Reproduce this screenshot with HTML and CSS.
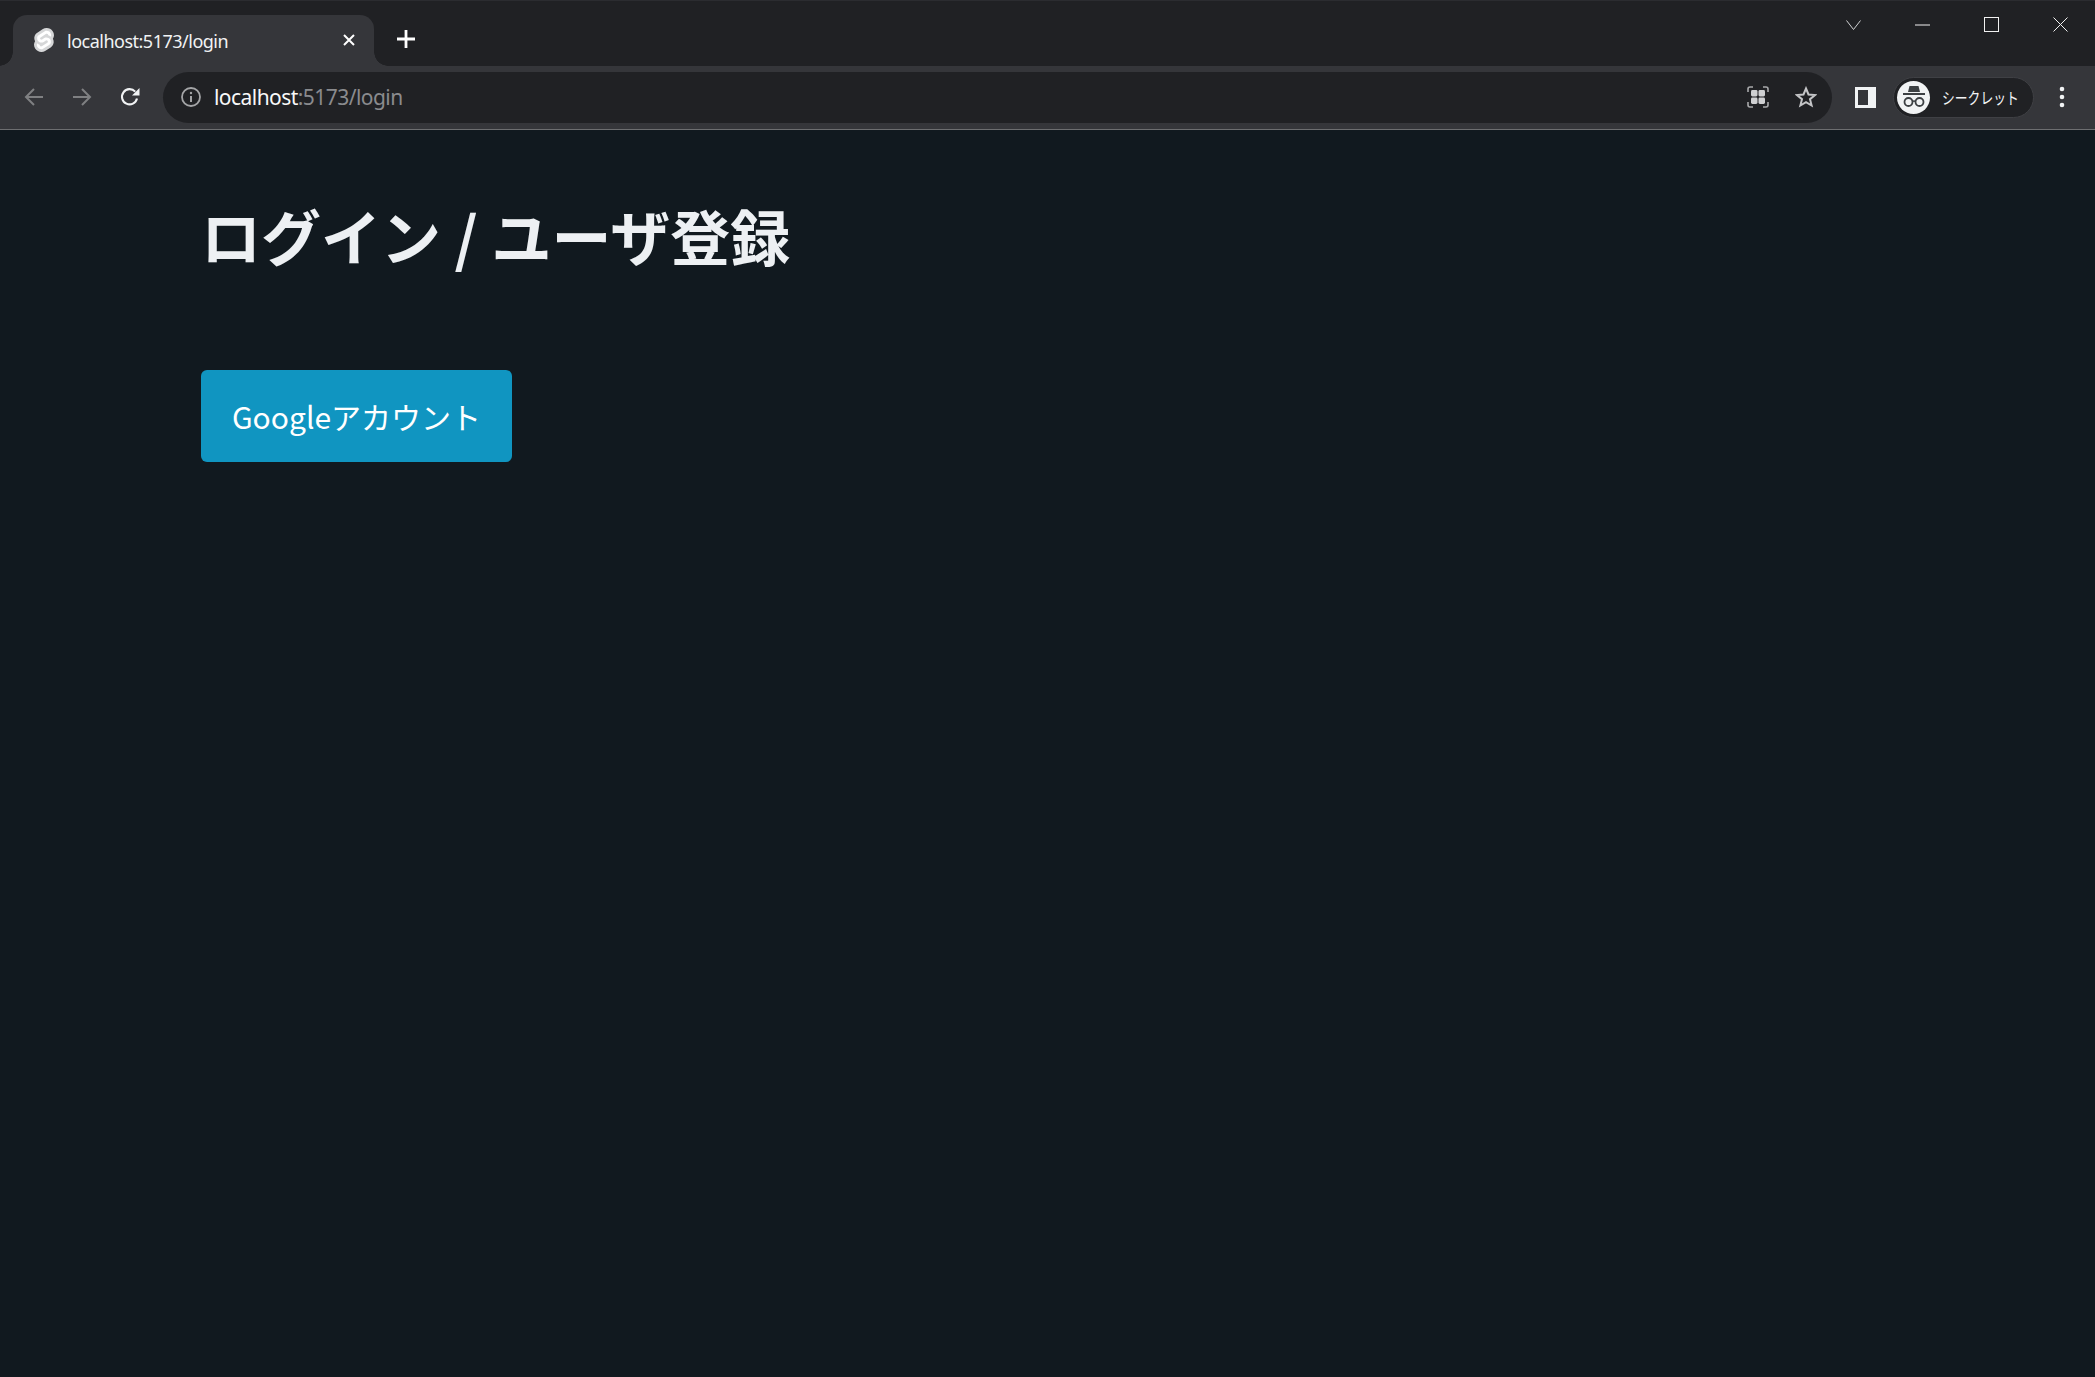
FILE: index.html
```html
<!DOCTYPE html>
<html lang="ja">
<head>
<meta charset="utf-8">
<title>ログイン / ユーザ登録</title>
<link rel="stylesheet" href="styles.css">
</head>
<body>
<div class="window">
  <header class="tabstrip">
    <div class="tab">
      <svg class="favicon" viewBox="0 0 98.100 118" width="20" height="24"><path d="M91.800 15.600C80.900-.1 59.200-4.700 43.600 5.200L16.100 22.800C8.600 27.500 3.400 35.200 1.900 43.900c-1.300 7.300-.2 14.800 3.300 21.300-2.400 3.600-4 7.600-4.700 11.800-1.600 8.900.5 18.100 5.700 25.400 11 15.700 32.600 20.300 48.200 10.400l27.500-17.500c7.500-4.700 12.700-12.400 14.200-21.100 1.300-7.300.2-14.800-3.300-21.300 2.400-3.600 4-7.600 4.700-11.800 1.700-9-.4-18.200-5.700-25.500" fill="#d6d7d8"/><path d="M40.900 103.900c-8.900 2.300-18.200-1.200-23.400-8.700-3.200-4.400-4.400-9.900-3.500-15.300.2-.9.400-1.700.6-2.600l.5-1.600 1.400 1c3.300 2.400 6.900 4.200 10.800 5.400l1 .3-.1 1c-.1 1.400.3 2.900 1.100 4.100 1.600 2.300 4.400 3.400 7.100 2.700.6-.2 1.200-.4 1.700-.7L65.500 72c1.400-.9 2.300-2.200 2.600-3.800.3-1.600-.1-3.300-1-4.600-1.600-2.300-4.400-3.300-7.100-2.600-.6.2-1.200.4-1.700.7l-10.500 6.700c-1.700 1.100-3.600 1.900-5.600 2.400-8.900 2.300-18.200-1.200-23.400-8.700-3.100-4.400-4.400-9.900-3.400-15.300.9-5.200 4.100-9.900 8.600-12.700l27.500-17.500c1.700-1.100 3.600-1.900 5.600-2.500 8.900-2.300 18.200 1.200 23.400 8.700 3.200 4.400 4.400 9.900 3.500 15.300-.2.900-.4 1.700-.7 2.600l-.5 1.600-1.400-1c-3.300-2.400-6.900-4.200-10.800-5.400l-1-.3.1-1c.1-1.400-.3-2.900-1.100-4.100-1.600-2.300-4.400-3.300-7.100-2.600-.6.2-1.200.4-1.700.7L32.400 46.100c-1.400.9-2.300 2.200-2.600 3.800s.1 3.300 1 4.600c1.600 2.300 4.400 3.300 7.100 2.600.6-.2 1.200-.4 1.700-.7l10.500-6.700c1.700-1.100 3.600-1.900 5.600-2.500 8.900-2.300 18.200 1.200 23.400 8.700 3.200 4.400 4.400 9.900 3.500 15.300-.9 5.200-4.100 9.900-8.600 12.700l-27.500 17.500c-1.700 1.100-3.600 1.900-5.600 2.500" fill="#ffffff"/></svg>
      <span class="tab-title">localhost:5173/login</span>
      <svg class="tab-close" viewBox="0 0 12 12" width="12" height="12"><path d="M1 1l10 10M11 1L1 11" stroke="#fff" stroke-width="2" fill="none"/></svg>
    </div>
    <svg class="new-tab" viewBox="0 0 18 18" width="18" height="18"><path d="M9 0v18M0 9h18" stroke="#fff" stroke-width="2.800" fill="none"/></svg>
    <div class="window-controls">
      <svg viewBox="0 0 15 10" width="15" height="10"><path d="M.5.500L7.500 9.500 14.500.500" stroke="#d0d1d2" stroke-width="1" fill="none"/></svg>
      <svg viewBox="0 0 15 2" width="15" height="2"><path d="M0 1h15" stroke="#f1f1f1" stroke-width="1" fill="none"/></svg>
      <svg viewBox="0 0 15 15" width="15" height="15"><rect x=".5" y=".5" width="14" height="14" stroke="#f1f1f1" stroke-width="1" fill="none"/></svg>
      <svg viewBox="0 0 15 15" width="15" height="15"><path d="M.5.500l14 14M14.500.500l-14 14" stroke="#f1f1f1" stroke-width="1" fill="none"/></svg>
    </div>
  </header>
  <nav class="toolbar">
    <svg class="nav-icon" viewBox="0 0 20 20" width="20" height="20"><path d="M19 10H2M10 2l-8 8 8 8" stroke="#7f8082" stroke-width="2" fill="none"/></svg>
    <svg class="nav-icon" viewBox="0 0 20 20" width="20" height="20"><path d="M1 10h17M10 2l8 8-8 8" stroke="#7f8082" stroke-width="2" fill="none"/></svg>
    <svg class="nav-icon" viewBox="0 0 20 20" width="20" height="20"><path d="M17 11.500A7.600 7.600 0 1 1 15.200 4.600" stroke="#f1f3f4" stroke-width="2.100" fill="none"/><path d="M19.500 1v7.500H12z" fill="#f1f3f4"/></svg>
    <div class="omnibox">
      <svg class="info" viewBox="0 0 20 20" width="20" height="20"><circle cx="10" cy="10" r="9" stroke="#a4a5a7" stroke-width="1.800" fill="none"/><path d="M10 9v6" stroke="#a4a5a7" stroke-width="2"/><circle cx="10" cy="6" r="1.200" fill="#a4a5a7"/></svg>
      <span class="url"><span class="host">localhost</span>:5173/login</span>
      <svg class="omni-qr" viewBox="0 0 22 22" width="22" height="22"><path d="M1 6V3a2 2 0 0 1 2-2h3M16 1h3a2 2 0 0 1 2 2v3M21 16v3a2 2 0 0 1-2 2h-3M6 21H3a2 2 0 0 1-2-2v-3" stroke="#a8a9ab" stroke-width="1.600" fill="none"/><rect x="4" y="4" width="6.500" height="6.500" rx="1.400" fill="#cfd0d2"/><rect x="11.500" y="4" width="6.500" height="6.500" rx="1.400" fill="#cfd0d2"/><rect x="4" y="11.500" width="6.500" height="6.500" rx="1.400" fill="#cfd0d2"/><rect x="11.500" y="11.500" width="6.500" height="6.500" rx="1.400" fill="#cfd0d2"/></svg>
      <svg class="omni-star" viewBox="0 0 22 22" width="22" height="22"><path d="M11 2.500l2.500 6 6.500.5-5 4.200 1.600 6.300L11 16.100l-5.600 3.400L7 13.200 2 9l6.500-.5z" stroke="#c4c5c7" stroke-width="2" fill="none"/></svg>
    </div>
    <svg class="side-panel" viewBox="0 0 21 21" width="21" height="21"><path fill-rule="evenodd" d="M0 0h21v21H0zM3 3v15h10V3z" fill="#f1f3f4"/></svg>
    <div class="profile">
      <span class="avatar">
        <svg viewBox="0 0 32 32" width="32" height="32"><path d="M10 11l1.500-6h9l1.500 6z" fill="#3c4043"/><path d="M5 13h22" stroke="#3c4043" stroke-width="2"/><circle cx="10.500" cy="21" r="4" stroke="#3c4043" stroke-width="1.800" fill="none"/><circle cx="21.500" cy="21" r="4" stroke="#3c4043" stroke-width="1.800" fill="none"/><path d="M14.500 20.500q1.500-1 3 0" stroke="#3c4043" stroke-width="1.500" fill="none"/></svg>
      </span>
      <span class="profile-name">シークレット</span>
    </div>
    <svg class="menu" viewBox="0 0 6 22" width="6" height="22"><circle cx="3" cy="3" r="2.300" fill="#f1f3f4"/><circle cx="3" cy="11" r="2.300" fill="#f1f3f4"/><circle cx="3" cy="19" r="2.300" fill="#f1f3f4"/></svg>
  </nav>
  <main class="page">
    <h1 class="title">ログイン / ユーザ登録</h1>
    <button class="google-btn" type="button">Googleアカウント</button>
  </main>
</div>
</body>
</html>
```

FILE: styles.css
```css
* { box-sizing: border-box; }
html, body { margin: 0; height: 100%; }
body {
  background: #11191f;
  font-family: "Noto Sans CJK JP", "Noto Sans", sans-serif;
  overflow: hidden;
}
.window { display: flex; flex-direction: column; height: 1377px; }

.tabstrip {
  height: 66px;
  flex: none;
  display: flex;
  align-items: flex-end;
  padding-left: 13px;
  background: #202124;
  border-top: 1px solid #2b2c30;
}
.tab {
  position: relative;
  width: 361px;
  height: 51px;
  display: flex;
  align-items: center;
  padding: 0 18px 0 21px;
  background: #35363a;
  border-radius: 14px 14px 0 0;
}
.tab::before, .tab::after {
  content: "";
  position: absolute;
  bottom: 0;
  width: 14px;
  height: 14px;
}
.tab::before { left: -14px; background: radial-gradient(circle at 0 0, #202124 13.500px, #35363a 14px); }
.tab::after { right: -14px; background: radial-gradient(circle at 100% 0, #202124 13.500px, #35363a 14px); }
.favicon { flex: none; margin-top: -2px; }
.tab-title {
  margin-left: 13px;
  font-family: "Noto Sans", sans-serif;
  font-size: 18px;
  letter-spacing: -0.5px;
  color: #f1f3f4;
  white-space: nowrap;
  padding-top: 1px;
}
.tab-close { margin-left: auto; flex: none; margin-top: -2px; margin-right: 1px; }
.new-tab { flex: none; margin: 0 0 18px 23px; }
.window-controls {
  margin-left: auto;
  align-self: flex-start;
  display: flex;
  align-items: center;
  gap: 54px;
  height: 15px;
  margin-top: 16px;
  padding-right: 27px;
}

.toolbar {
  height: 64px;
  flex: none;
  display: flex;
  align-items: center;
  background: #35363a;
  border-bottom: 1px solid #6d6e70;
  padding: 0 0 1px 24px;
}
.nav-icon { flex: none; margin-right: 28px; }
.nav-icon:nth-child(3) { margin-right: 23px; }
.omnibox {
  width: 1669px;
  height: 51px;
  flex: none;
  display: flex;
  align-items: center;
  padding: 0 15px 0 18px;
  background: #202124;
  border-radius: 26px;
}
.info { flex: none; }
.url {
  margin-left: 13px;
  font-family: "Noto Sans", sans-serif;
  font-size: 21px;
  letter-spacing: -0.55px;
  color: #8a8b8e;
  white-space: nowrap;
}
.host { color: #f8f8f8; }
.omni-qr { margin-left: auto; flex: none; }
.omni-star { margin-left: 26px; flex: none; }
.side-panel { flex: none; margin-left: 23px; }
.profile {
  flex: none;
  width: 141px;
  height: 41px;
  margin-left: 17px;
  display: flex;
  align-items: center;
  padding-left: 3px;
  background: #202124;
  border: 1px solid #3f4044;
  border-radius: 21px;
}
.avatar {
  width: 33px;
  height: 33px;
  flex: none;
  display: flex;
  align-items: center;
  justify-content: center;
  background: #f1f3f4;
  border-radius: 50%;
}
.profile-name {
  margin-left: 12px;
  font-size: 16px;
  color: #f1f3f4;
  white-space: nowrap;
  transform: scaleX(0.8);
  transform-origin: left center;
}
.menu { flex: none; margin-left: 25px; }

.page { flex: 1; padding: 64px 0 0 201px; }
.title {
  margin: 0 0 94px;
  font-size: 60px;
  line-height: 82px;
  font-weight: 700;
  color: #edf0f3;
}
.google-btn {
  display: block;
  width: 311px;
  height: 92px;
  padding: 0;
  font-family: inherit;
  font-size: 30px;
  color: #fff;
  background: #1095c1;
  border: 0;
  border-radius: 6px;
}
```
